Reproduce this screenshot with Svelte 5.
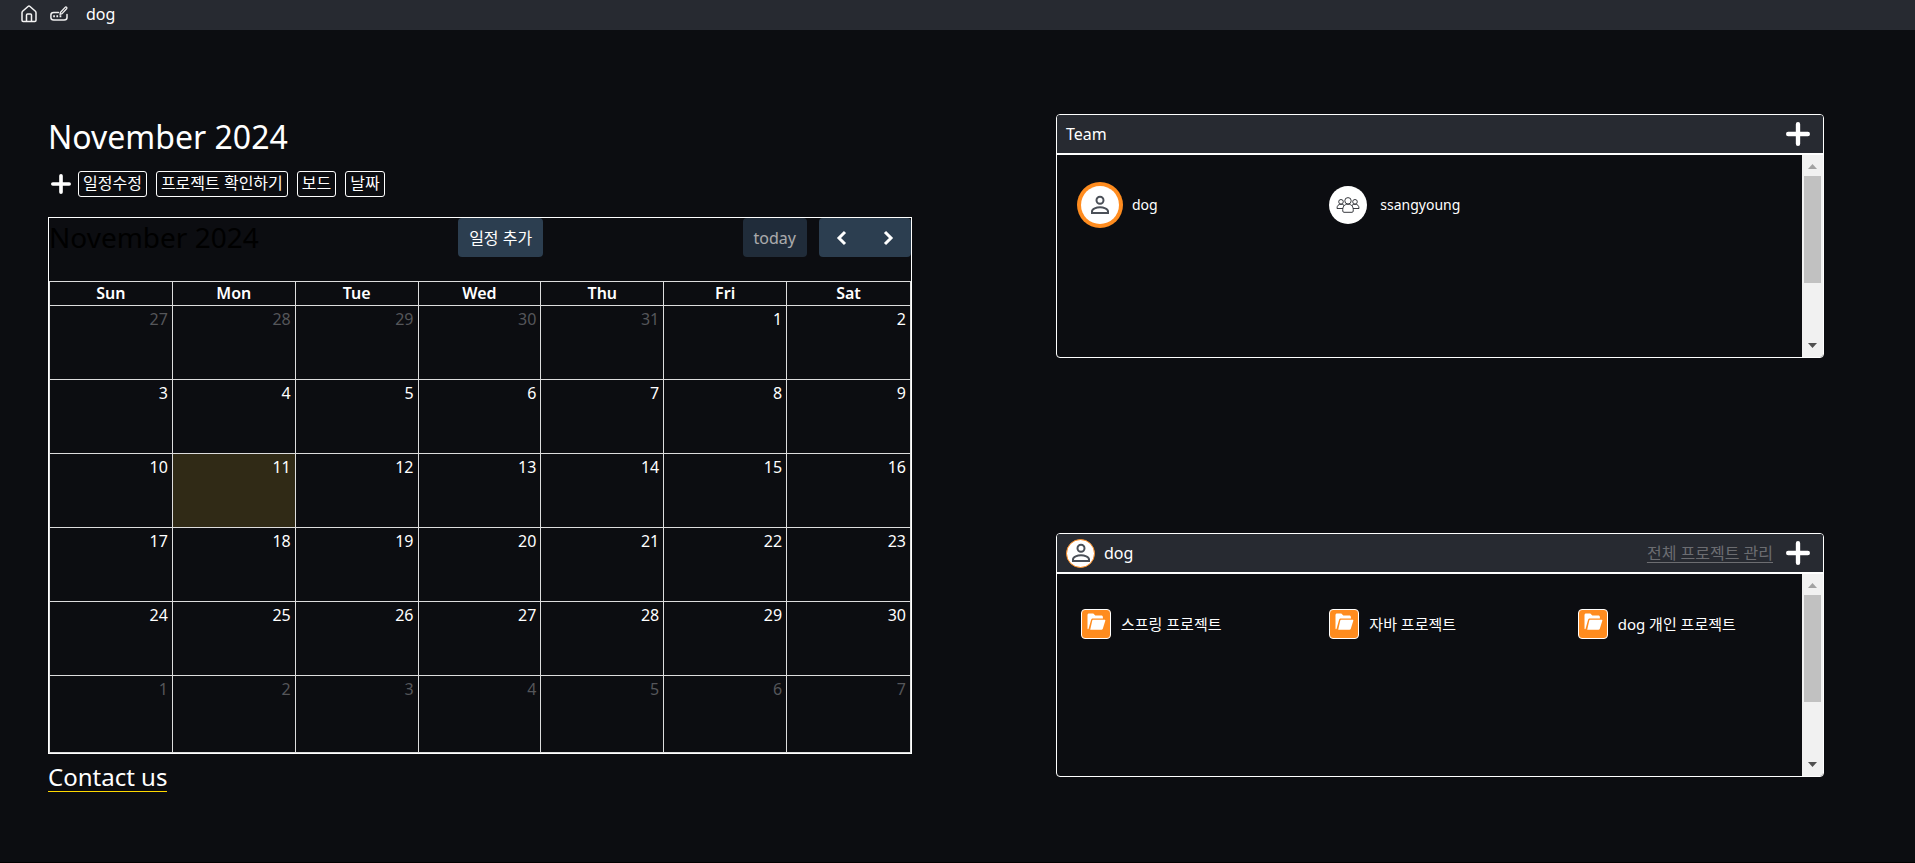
<script>
  const weekdays = ['Sun', 'Mon', 'Tue', 'Wed', 'Thu', 'Fri', 'Sat'];
  const weeks = [
    [27, 28, 29, 30, 31, 1, 2],
    [3, 4, 5, 6, 7, 8, 9],
    [10, 11, 12, 13, 14, 15, 16],
    [17, 18, 19, 20, 21, 22, 23],
    [24, 25, 26, 27, 28, 29, 30],
    [1, 2, 3, 4, 5, 6, 7]
  ];
  const today = 11;
  const actions = ['일정수정', '프로젝트 확인하기', '보드', '날짜'];
  const teams = [
    { name: 'dog', kind: 'person' },
    { name: 'ssangyoung', kind: 'group' }
  ];
  const projects = ['스프링 프로젝트', '자바 프로젝트', 'dog 개인 프로젝트'];

  function isOther(week, day) {
    return (week === 0 && day > 7) || (week === 5 && day < 20);
  }
</script>

{#snippet plus()}
  <svg viewBox="0 0 22 22" aria-hidden="true">
    <path d="M11 2v18M2 11h18" fill="none" stroke="#fff" stroke-width="4" stroke-linecap="round" />
  </svg>
{/snippet}

{#snippet person()}
  <svg class="person" viewBox="0 0 20 20" aria-hidden="true">
    <g fill="none" stroke="#4b5058" stroke-width="2">
      <circle cx="10" cy="5.3" r="3.5" />
      <path d="M2 18v-1.6c0-2.7 4.6-4.1 8-4.1s8 1.400 8 4.100V18z" />
    </g>
  </svg>
{/snippet}

{#snippet group()}
  <svg class="group" viewBox="0 0 24 16" aria-hidden="true">
    <g fill="#fff" stroke="#22252a" stroke-width="0.9">
      <path d="M1 11.500c0-2.800 1.300-4.300 4-4.300s4 1.500 4 4.300z" />
      <path d="M15 11.500c0-2.800 1.300-4.300 4-4.300s4 1.500 4 4.300z" />
      <circle cx="5" cy="4.800" r="2.300" />
      <circle cx="19" cy="4.800" r="2.300" />
      <path d="M6.800 14.200c-.4-4.400 1.300-7 5.200-7s5.600 2.600 5.200 7c0 .7-.5 1.100-1.200 1.100H8c-.7 0-1.200-.4-1.200-1.100z" />
      <circle cx="12" cy="3.800" r="3.200" />
    </g>
  </svg>
{/snippet}

{#snippet scrollbar()}
  <div class="scrollbar" aria-hidden="true">
    <svg viewBox="0 0 21 21"><path d="M6 14h9l-4.500-5z" fill="#a3a3a3" /></svg>
    <div class="thumb"></div>
    <svg viewBox="0 0 21 21"><path d="M6 7h9l-4.500 5z" fill="#505050" /></svg>
  </div>
{/snippet}

<div class="page">
  <header class="topbar">
    <a href="#home" aria-label="Home">
      <svg viewBox="0 0 18 18" width="18" height="18" aria-hidden="true">
        <path d="M2 7.700v7.600c0 .8.5 1.200 1.200 1.200h11.600c.7 0 1.200-.4 1.200-1.200V7.700c0-.6-.2-1-.6-1.400L10 1.500c-.6-.5-1.400-.5-2 0L2.600 6.300C2.200 6.700 2 7.100 2 7.700zM6.500 16.500V10c0-.7.4-1 1-1h3c.6 0 1 .3 1 1v6.500" fill="none" stroke="#f4f4f4" stroke-width="1.500" stroke-linejoin="round" />
      </svg>
    </a>
    <a href="#edit" aria-label="Edit">
      <svg viewBox="0 0 20 18" width="20" height="18" aria-hidden="true">
        <g fill="none" stroke="#f0f0f0" stroke-width="1.500" stroke-linecap="round" stroke-linejoin="round">
          <path d="M9.500 7.500H4.700C3.100 7.500 1.900 8.600 1.900 10v2.500c0 1.500 1.200 2.500 2.800 2.500h10.500c1.600 0 2.800-1 2.800-2.500V9.500" />
          <path d="M11 9.300l.6-2.100 4.500-4.800c.5-.5 1.100-.5 1.500-.1s.5 1 0 1.500l-4.500 4.800z" stroke-width="1.300" />
        </g>
        <path d="M4.200 10.200h1.700v2H4.200zM7.400 10.200h1.700v2H7.400zM10.600 10.200h1.700v2h-1.700z" fill="#f0f0f0" />
      </svg>
    </a>
    <span class="user">dog</span>
  </header>

  <main>
    <section class="schedule">
      <h1>November 2024</h1>
      <div class="actions">
        <button class="add" aria-label="Add">{@render plus()}</button>
        {#each actions as label}
          <button class="action">{label}</button>
        {/each}
      </div>

      <div class="calendar">
        <div class="toolbar">
          <h2>November 2024</h2>
          <button class="fc">일정 추가</button>
          <div class="nav">
            <button class="fc" disabled>today</button>
            <div class="pair">
              <button class="fc arrow" aria-label="Previous month">
                <svg viewBox="0 0 12 16" aria-hidden="true"><path d="M9 2L3 8l6 6" /></svg>
              </button>
              <button class="fc arrow" aria-label="Next month">
                <svg viewBox="0 0 12 16" aria-hidden="true"><path d="M3 2l6 6-6 6" /></svg>
              </button>
            </div>
          </div>
        </div>
        <table>
          <thead>
            <tr>
              {#each weekdays as day}<th scope="col">{day}</th>{/each}
            </tr>
          </thead>
          <tbody>
            {#each weeks as week, w}
              <tr>
                {#each week as day}
                  <td class:other={isOther(w, day)} class:today={day === today}>{day}</td>
                {/each}
              </tr>
            {/each}
          </tbody>
        </table>
      </div>
      <a class="contact" href="#contact">Contact us</a>
    </section>

    <div class="panels">
      <section class="panel">
        <header>
          <span>Team</span>
          <button class="add large" aria-label="Add team">{@render plus()}</button>
        </header>
        <div class="body">
          <ul class="teams">
            {#each teams as team}
              <li>
                <span class="avatar" class:active={team.kind === 'person'}>
                  {#if team.kind === 'person'}{@render person()}{:else}{@render group()}{/if}
                </span>
                {team.name}
              </li>
            {/each}
          </ul>
          {@render scrollbar()}
        </div>
      </section>

      <section class="panel">
        <header>
          <span class="owner"><span class="badge">{@render person()}</span>dog</span>
          <a class="manage" href="#projects">전체 프로젝트 관리</a>
          <button class="add large" aria-label="Add project">{@render plus()}</button>
        </header>
        <div class="body">
          <ul class="projects">
            {#each projects as project}
              <li>
                <span class="folder">
                  <svg viewBox="0 0 20 20" aria-hidden="true">
                    <path d="M1.500 16.500V3c0-1 .6-1.600 1.600-1.600h4.200l2 2h6c1 0 1.600.6 1.600 1.600v1.500H7c-1 0-1.600.4-1.900 1.300L2.500 17c-.5.300-1 .1-1-.5z" fill="#fff" />
                    <path d="M7.200 7.800h11.300c.7 0 1 .4.8 1l-2.500 8c-.3.700-.7 1-1.400 1H4.200l2-9c.1-.6.4-1 1-1z" fill="#fff" />
                  </svg>
                </span>
                {project}
              </li>
            {/each}
          </ul>
          {@render scrollbar()}
        </div>
      </section>
    </div>
  </main>
</div>

<style>
  :global(body) {
    background: #0c0d11;
  }

  .page {
    box-sizing: border-box;
    min-height: 100vh;
    border-bottom: 1px solid #000;
    color: #fff;
    font: 16px/24px 'Noto Sans', 'Noto Sans CJK KR', sans-serif;
  }

  button {
    margin: 0;
    padding: 0;
    border: 0;
    background: none;
    color: inherit;
    font: inherit;
  }

  a {
    color: inherit;
  }

  svg {
    display: block;
  }

  .topbar {
    display: flex;
    align-items: center;
    gap: 11px;
    height: 28px;
    padding: 0 20px 2px;
    background: #272a31;
  }

  .user {
    margin-left: 6px;
  }

  main {
    display: grid;
    grid-template-columns: 9fr 8fr;
    column-gap: 144px;
    align-items: start;
    padding: 84px 91px 0 48px;
  }

  h1,
  h2 {
    margin: 0;
    font-weight: 400;
  }

  h1 {
    font-size: 32px;
    line-height: 46px;
  }

  .actions {
    display: flex;
    align-items: center;
    gap: 9px;
    margin: 11px 0 20px 3px;
  }

  .add {
    width: 20px;
    height: 20px;
    margin-right: -2px;
  }

  .add.large {
    width: 24px;
    height: 24px;
    margin: 0;
  }

  .action {
    height: 26px;
    padding: 0 4px 2px;
    border: 1px solid #fff;
    border-radius: 3px;
    line-height: 20px;
  }

  .calendar {
    border: 1px solid #fff;
  }

  .toolbar {
    display: flex;
    align-items: flex-start;
    justify-content: space-between;
    margin-bottom: 24px;
  }

  h2 {
    color: #000;
    font-size: 28px;
    line-height: 39px;
  }

  .fc {
    height: 39px;
    padding: 0 11px;
    border-radius: 4px;
    background: #2c3e50;
  }

  .fc:disabled {
    opacity: 0.65;
  }

  .nav {
    display: flex;
    gap: 12px;
  }

  .pair {
    display: flex;
  }

  .fc.arrow {
    padding: 0 17px;
  }

  .arrow:first-child {
    border-radius: 4px 0 0 4px;
  }

  .arrow:last-child {
    border-radius: 0 4px 4px 0;
  }

  .arrow svg {
    width: 12px;
    height: 16px;
    fill: none;
    stroke: #fff;
    stroke-width: 3;
  }

  table {
    width: 100%;
    border: 1px solid #ddd;
    border-spacing: 0;
    table-layout: fixed;
  }

  th,
  td {
    padding: 0;
    border-right: 1px solid #ddd;
    border-bottom: 1px solid #ddd;
  }

  th {
    height: 23px;
    font-weight: 600;
    line-height: 23px;
  }

  td {
    box-sizing: border-box;
    height: 74px;
    padding: 1px 4px;
    text-align: right;
    vertical-align: top;
  }

  th:last-child,
  td:last-child {
    border-right: 0;
  }

  tr:last-child td {
    height: 76px;
    border-bottom: 0;
  }

  .other {
    color: #55565a;
  }

  .today {
    background: #302a16;
  }

  .contact {
    display: inline-block;
    margin-top: 9px;
    border-bottom: 1px solid #ffd800;
    font-size: 24px;
    line-height: 28px;
    text-decoration: none;
  }

  .panels {
    display: grid;
    gap: 175px;
  }

  .panel {
    overflow: hidden;
    border: 1px solid #fff;
    border-radius: 4px;
  }

  .panel header {
    display: flex;
    align-items: center;
    gap: 13px;
    height: 38px;
    padding: 0 13px 0 9px;
    border-bottom: 2px solid #fff;
    background: #272a31;
  }

  .panel header > span {
    margin-right: auto;
  }

  .owner {
    display: flex;
    align-items: center;
    gap: 9px;
  }

  .manage {
    color: #6c6d71;
    text-underline-offset: 3px;
  }

  .body {
    display: flex;
    min-height: 202px;
  }

  ul {
    flex: 1;
    display: grid;
    grid-template-columns: repeat(3, 1fr);
    align-content: start;
    margin: 0;
    padding: 0;
    list-style: none;
  }

  li {
    display: flex;
    align-items: center;
    padding-left: 24px;
  }

  .teams {
    padding-top: 31px;
    font-size: 14px;
  }

  .teams li {
    gap: 13px;
  }

  .projects {
    padding-top: 35px;
    font-size: 15px;
  }

  .projects li {
    gap: 10px;
  }

  .avatar,
  .badge {
    display: grid;
    place-items: center;
    border-radius: 50%;
    background: #fff;
  }

  .avatar {
    width: 38px;
    height: 38px;
  }

  .active {
    box-shadow: 0 0 0 4px #ff8c1f;
  }

  .badge {
    box-sizing: border-box;
    width: 29px;
    height: 29px;
    border: 1px solid #ff8c1f;
  }

  .person {
    width: 20px;
    height: 20px;
  }

  .group {
    width: 24px;
    height: 16px;
  }

  .folder {
    box-sizing: border-box;
    display: grid;
    place-items: center;
    width: 30px;
    height: 30px;
    padding-bottom: 4px;
    border: 1px solid #fff;
    border-radius: 4px;
    background: #ff8c1f;
  }

  .folder svg {
    width: 20px;
    height: 20px;
  }

  .scrollbar {
    display: flex;
    flex-direction: column;
    width: 21px;
    background: #f1f1f1;
  }

  .scrollbar svg {
    width: 21px;
    height: 21px;
  }

  .thumb {
    height: 107px;
    margin: 0 2px auto;
    background: #c1c1c1;
  }
</style>
